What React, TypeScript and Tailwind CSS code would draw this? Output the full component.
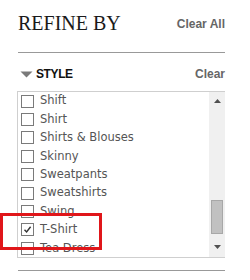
import { Fragment } from 'react'

const STYLES = ['Shift', 'Shirt', 'Shirts & Blouses', 'Skinny', 'Sweatpants', 'Sweatshirts', 'Swing', 'T-Shirt', 'Tea Dress']
const CHECKED = 'T-Shirt'

function Checkbox({ checked }: { checked: boolean }) {
  return (
    <span className="flex h-[13px] w-[13px] shrink-0 items-center justify-center border border-[#7a7a7a] bg-white">
      {checked && (
        <svg width="9" height="9" viewBox="0 0 9 9">
          <path d="M1.5 4.8 L3.6 7 L7.6 1.8" fill="none" stroke="#333" strokeWidth="1.4" />
        </svg>
      )}
    </span>
  )
}

export default function App() {
  return (
    <div className="relative h-[280px] w-[250px] overflow-hidden bg-white">
      <div className="ml-[18px] w-[207px]">
        <div className="flex h-[52px] items-start justify-between pt-[11px]">
          <h1 className="text-[20px] leading-[24px] text-[#1a1a1a] [font-family:'Liberation_Serif',serif]">REFINE BY</h1>
          <button
            type="button"
            className="mt-[6px] text-[12px] font-bold leading-[14px] text-[#666] [font-family:'Liberation_Sans',sans-serif]"
          >
            Clear All
          </button>
        </div>
        <div className="h-px bg-[#999]" />

        <div className="flex h-[38px] items-start justify-between pt-[14px] [font-family:'Liberation_Sans',sans-serif]">
          <div className="ml-[2px] flex items-center gap-[3px]">
            <svg width="13" height="7" viewBox="0 0 13 7" className="mt-[1px]">
              <path d="M0.5 0.5 L12.5 0.5 L6.5 6.5 Z" fill="#7a7a7a" />
            </svg>
            <span className="text-[12px] font-bold leading-[14px] tracking-[-0.4px] text-[#111]">STYLE</span>
          </div>
          <button type="button" className="text-[12px] font-bold leading-[14px] text-[#666]">
            Clear
          </button>
        </div>

        <div className="-ml-px flex h-[167px] border border-r-0 border-[#cfcfcf]">
          <ul className="flex-1 overflow-hidden pl-[3px]">
            {STYLES.map((s) => (
              <Fragment key={s}>
                <li className="flex h-[18.4px] items-center gap-[6px]">
                  <Checkbox checked={s === CHECKED} />
                  <span className="text-[11.5px] leading-none text-[#555] [font-family:'DejaVu_Sans',sans-serif]">{s}</span>
                </li>
              </Fragment>
            ))}
          </ul>
          <div className="flex w-[16px] flex-col items-center bg-[#f0f0f0] py-[6px]">
            <svg width="7" height="4" viewBox="0 0 7 4" className="mt-[1px]">
              <path d="M0 4 L3.5 0 L7 4 Z" fill="#505050" />
            </svg>
            <div className="flex-1" />
            <div className="mb-[11px] h-[34px] w-[12px] border border-[#a8a8a8] bg-[#c1c1c1]" />
            <svg width="7" height="4" viewBox="0 0 7 4" className="mb-[2px]">
              <path d="M0 0 L7 0 L3.5 4 Z" fill="#505050" />
            </svg>
          </div>
        </div>

        <div className="mt-[12px] h-px bg-[#999]" />
      </div>

      <div className="absolute left-0 top-[213px] h-[37px] w-[102px] border-[3px] border-[#e0161a]" />
    </div>
  )
}
